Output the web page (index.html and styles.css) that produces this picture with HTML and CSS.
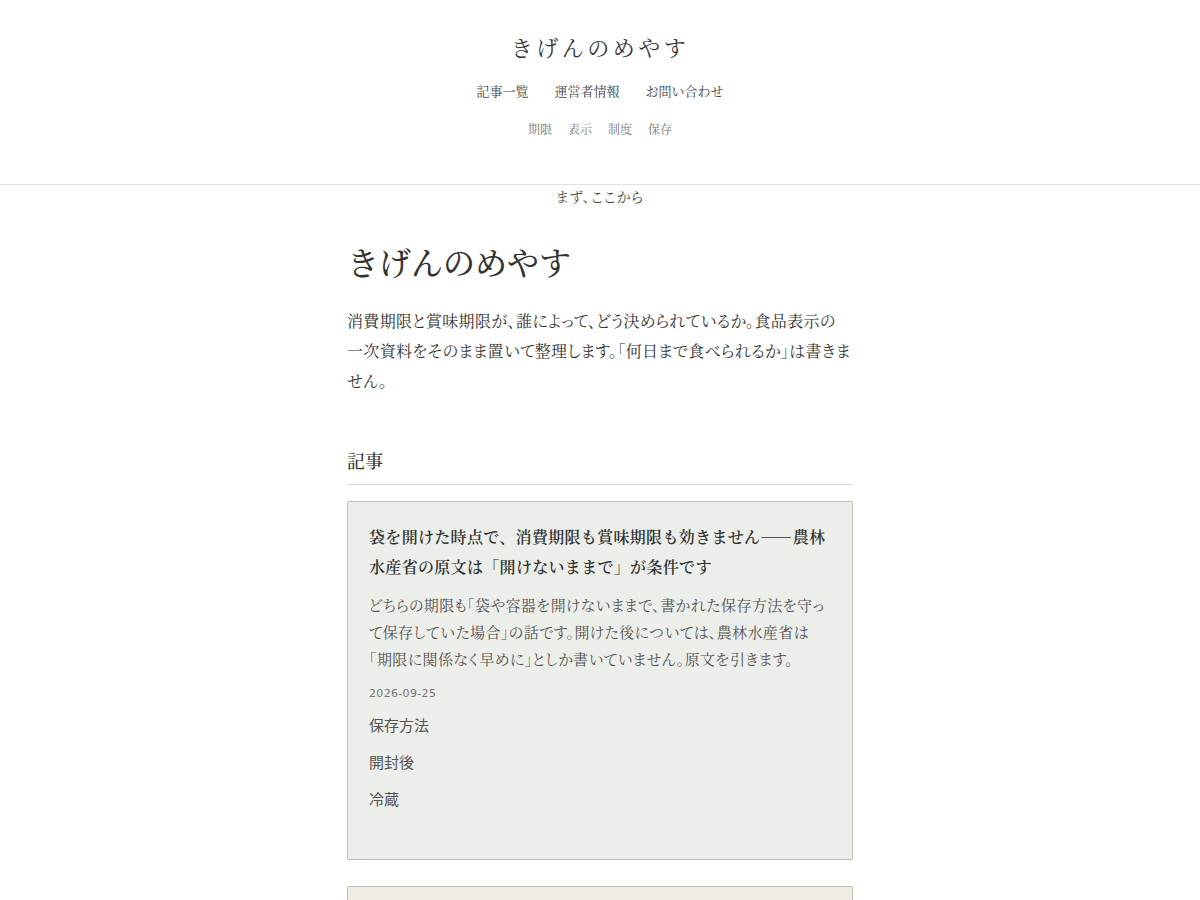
FILE: index.html
```html
<!DOCTYPE html>
<html lang="ja">
<head>
<meta charset="utf-8">
<title>きげんのめやす</title>
<link rel="stylesheet" href="styles.css">
</head>
<body>
<header class="site-header">
  <div class="site-title">きげんのめやす</div>
  <nav class="main-nav">
    <a href="#">記事一覧</a>
    <a href="#">運営者情報</a>
    <a href="#">お問い合わせ</a>
  </nav>
  <nav class="tag-nav">
    <a href="#">期限</a>
    <a href="#">表示</a>
    <a href="#">制度</a>
    <a href="#">保存</a>
  </nav>
</header>
<div class="start">まず、ここから</div>
<main class="content">
  <h1 class="page-title">きげんのめやす</h1>
  <p class="lead">消費期限と賞味期限が、誰によって、どう決められているか。食品表示の一次資料をそのまま置いて整理します。「何日まで食べられるか」は書きません。</p>
  <h2 class="section-title">記事</h2>
  <article class="card">
    <h3 class="card-title">袋を開けた時点で、消費期限も賞味期限も効きません――農林水産省の原文は「開けないままで」が条件です</h3>
    <p class="card-excerpt">どちらの期限も「袋や容器を開けないままで、書かれた保存方法を守って保存していた場合」の話です。開けた後については、農林水産省は「期限に関係なく早めに」としか書いていません。原文を引きます。</p>
    <div class="card-date">2026-09-25</div>
    <ul class="card-tags">
      <li>保存方法</li>
      <li>開封後</li>
      <li>冷蔵</li>
    </ul>
  </article>
  <article class="card card-alt"></article>
</main>
</body>
</html>
```
FILE: styles.css
```css
html, body {
  margin: 0;
  padding: 0;
  background: #ffffff;
}
body {
  font-family: "Noto Serif CJK JP", "Noto Sans CJK JP", serif;
  color: #333333;
  font-feature-settings: "palt";
}
a {
  color: inherit;
  text-decoration: none;
}
.site-header {
  text-align: center;
  border-bottom: 1px solid #e2e2da;
  padding-top: 31px;
  height: 153px;
  font-feature-settings: normal;
}
.site-title {
  font-size: 22px;
  line-height: 32px;
  letter-spacing: 0.16em;
  color: #333;
}
.main-nav {
  margin-top: 19px;
  display: flex;
  justify-content: center;
  gap: 26px;
  font-size: 13px;
  line-height: 18px;
  color: #444;
}
.tag-nav {
  margin-top: 20px;
  display: flex;
  justify-content: center;
  gap: 16px;
  font-size: 12px;
  line-height: 18px;
  color: #777;
}
.start {
  text-align: center;
  font-size: 14px;
  line-height: 22px;
  letter-spacing: 0.08em;
  color: #444;
}
.content {
  width: 506px;
  margin: 0 auto;
}
.page-title {
  margin: 30px 0 0;
  font-size: 32px;
  line-height: 48px;
  font-weight: 500;
  color: #333;
  font-feature-settings: normal;
}
.lead {
  margin: 21px 0 0;
  padding-right: 2px;
  font-size: 16px;
  line-height: 30px;
  color: #333;
  letter-spacing: 0.02em;
}
.section-title {
  margin: 50px 0 0;
  font-size: 18px;
  line-height: 28px;
  font-weight: 500;
  padding-bottom: 10px;
  border-bottom: 1px solid #e0e0da;
}
.card {
  margin-top: 16px;
  background: #eceee9;
  border: 1px solid #bdbdb6;
  border-radius: 2px;
  padding: 20px 21px 47px;
}
.card-title {
  margin: 0;
  font-size: 16px;
  line-height: 30px;
  font-weight: 600;
  color: #333;
  letter-spacing: 0.02em;
  font-feature-settings: normal;
}
.card-excerpt {
  margin: 9px 0 0;
  font-size: 15px;
  line-height: 27px;
  color: #555;
  letter-spacing: 0.025em;
}
.card-date {
  margin-top: 13px;
  font-family: "DejaVu Sans", sans-serif;
  font-size: 11px;
  line-height: 18px;
  color: #777;
  letter-spacing: 0.03em;
  font-feature-settings: normal;
}
.card-tags {
  list-style: none;
  margin: 11px 0 0;
  padding: 0;
  display: flex;
  flex-direction: column;
  gap: 13px;
  font-family: "DejaVu Sans", "Noto Sans CJK JP", sans-serif;
  font-size: 15px;
  line-height: 24px;
  color: #555;
  font-feature-settings: normal;
}
.card-alt {
  margin-top: 26px;
  background: #f1ece3;
  height: 60px;
  padding: 0;
}
```
